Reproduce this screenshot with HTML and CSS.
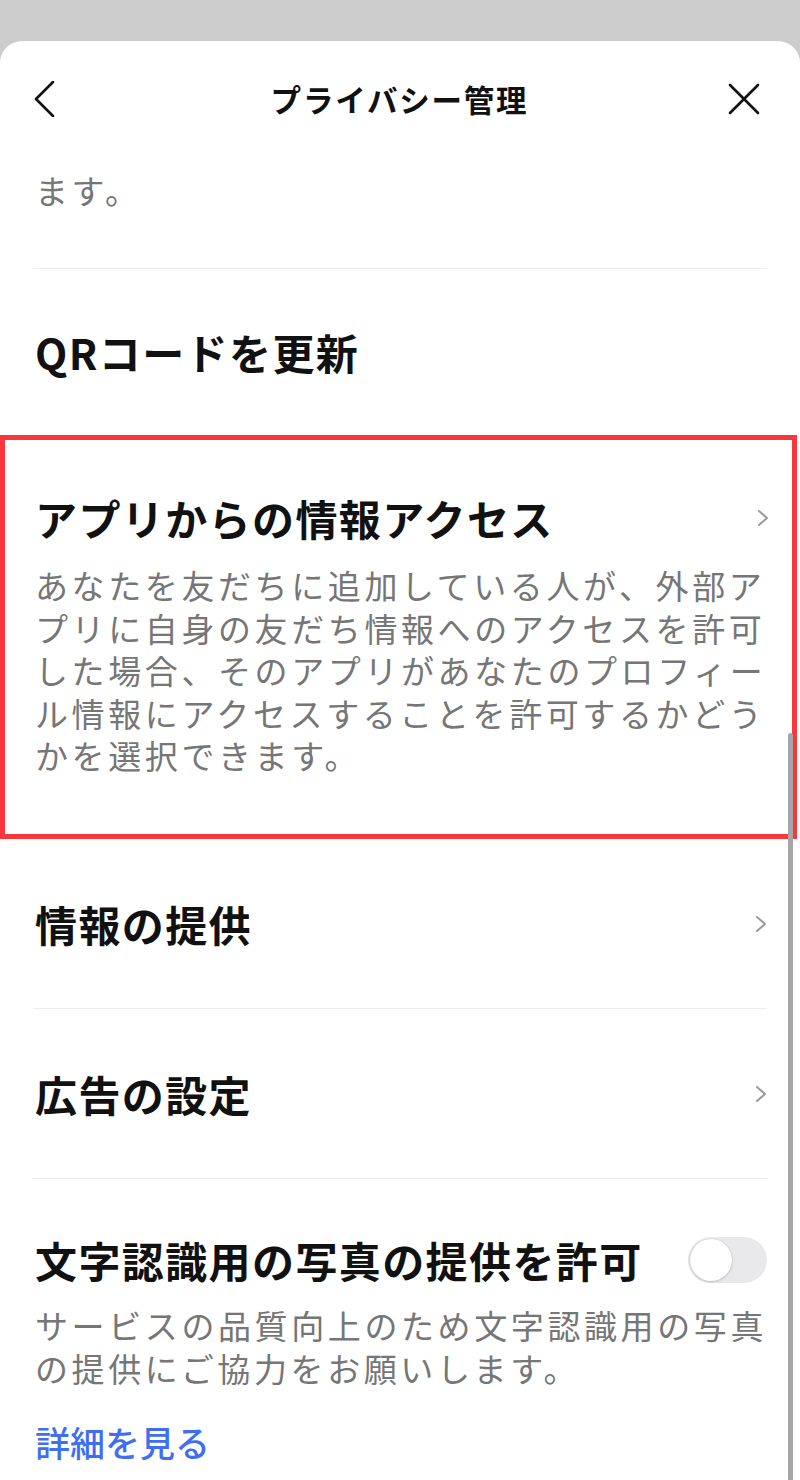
FILE: index.html
```html
<!DOCTYPE html>
<html lang="ja">
<head>
<meta charset="utf-8">
<title>プライバシー管理</title>
<link rel="stylesheet" href="styles.css">
</head>
<body>
<div class="sheet">
  <header class="header">
    <button class="icon-btn back" aria-label="戻る">
      <svg width="24" height="36" viewBox="0 0 24 36"><polyline points="20,1 3,18 20,35" fill="none" stroke="#111" stroke-width="2.6" stroke-linecap="round" stroke-linejoin="round"/></svg>
    </button>
    <h1 class="title">プライバシー管理</h1>
    <button class="icon-btn close" aria-label="閉じる">
      <svg width="32" height="32" viewBox="0 0 32 32"><path d="M2 2 L30 30 M30 2 L2 30" fill="none" stroke="#111" stroke-width="2.6" stroke-linecap="round"/></svg>
    </button>
  </header>

  <div class="list">
    <div class="row intro">
      <p class="desc">ます。</p>
    </div>

    <div class="row qr">
      <span class="heading">QRコードを更新</span>
    </div>

    <div class="row highlight">
      <div class="row-head">
        <span class="heading">アプリからの情報アクセス</span>
        <svg class="chev" width="12" height="18" viewBox="0 0 12 18"><polyline points="2,2 10,9 2,16" fill="none" stroke="#9a9a9a" stroke-width="2" stroke-linecap="round" stroke-linejoin="round"/></svg>
      </div>
      <p class="desc block">あなたを友だちに追加している人が、外部ア<br>プリに自身の友だち情報へのアクセスを許可<br>した場合、そのアプリがあなたのプロフィー<br>ル情報にアクセスすることを許可するかどう<br>かを選択できます。</p>
    </div>

    <div class="row simple">
      <div class="row-head">
        <span class="heading">情報の提供</span>
        <svg class="chev" width="12" height="18" viewBox="0 0 12 18"><polyline points="2,2 10,9 2,16" fill="none" stroke="#9a9a9a" stroke-width="2" stroke-linecap="round" stroke-linejoin="round"/></svg>
      </div>
    </div>

    <div class="row simple top-border">
      <div class="row-head">
        <span class="heading">広告の設定</span>
        <svg class="chev" width="12" height="18" viewBox="0 0 12 18"><polyline points="2,2 10,9 2,16" fill="none" stroke="#9a9a9a" stroke-width="2" stroke-linecap="round" stroke-linejoin="round"/></svg>
      </div>
    </div>

    <div class="row toggle-row top-border">
      <div class="row-head">
        <span class="heading">文字認識用の写真の提供を許可</span>
        <span class="toggle"><span class="knob"></span></span>
      </div>
      <p class="desc block">サービスの品質向上のため文字認識用の写真<br>の提供にご協力をお願いします。</p>
      <a class="link" href="#">詳細を見る</a>
    </div>
  </div>

  <div class="scrollbar"></div>
</div>
</body>
</html>
```

FILE: styles.css
```css
html, body {
  margin: 0;
  padding: 0;
}

body {
  background: #cccccc;
  font-family: "Noto Sans CJK JP", "Noto Sans", sans-serif;
  color: #111;
  width: 800px;
  height: 1480px;
  overflow: hidden;
}

.sheet {
  position: relative;
  margin-top: 41px;
  background: #fff;
  border-radius: 22px 22px 0 0;
  height: 1439px;
  overflow: hidden;
}

.header {
  height: 116px;
  display: grid;
  grid-template-columns: 1fr auto 1fr;
  align-items: center;
  padding: 0 40px 0 33px;
}

.icon-btn {
  border: 0;
  background: none;
  padding: 0;
  display: flex;
  align-items: center;
}

.back {
  justify-self: start;
}

.close {
  justify-self: end;
}

.title {
  margin: 0;
  font-size: 30.5px;
  font-weight: 700;
  letter-spacing: 1.8px;
  line-height: 40px;
  margin-left: 6px;
}

.list {
  display: flex;
  flex-direction: column;
}

.row {
  margin: 0 33px;
  padding: 0 2px;
}

.intro {
  padding-top: 10px;
  padding-bottom: 55px;
  border-bottom: 1.5px solid #ececec;
}

.desc {
  margin: 0;
  font-size: 33px;
  letter-spacing: 3.6px;
  line-height: 46px;
  color: #767676;
  white-space: nowrap;
}

.desc.block {
  line-height: 42.5px;
}

.heading {
  font-size: 42px;
  font-weight: 700;
  letter-spacing: 1.4px;
  line-height: 56px;
  white-space: nowrap;
}

.qr {
  padding-top: 55px;
  padding-bottom: 55px;
}

.simple {
  padding-top: 56.5px;
  padding-bottom: 56.5px;
}

.top-border {
  border-top: 1.5px solid #ececec;
}

.row-head {
  display: flex;
  align-items: center;
  justify-content: space-between;
}

.chev {
  margin-right: -2px;
}

.highlight {
  margin: 0 3px 0 0;
  border: 5px solid #f7373b;
  padding: 49.5px 25px 57.5px 30px;
}

.highlight .desc {
  margin-top: 18.5px;
}

.toggle-row {
  padding-top: 52.5px;
  padding-bottom: 30px;
}

.toggle-row .desc {
  margin-top: 16.5px;
}

.toggle {
  width: 79px;
  height: 46px;
  border-radius: 23px;
  background: #e9e9eb;
  display: flex;
  align-items: center;
  padding: 0 2px;
  box-sizing: border-box;
  margin-right: -2px;
}

.knob {
  width: 42px;
  height: 42px;
  border-radius: 50%;
  background: #fff;
  box-shadow: 0 1px 3px rgba(0, 0, 0, 0.18), 0 0 0 0.5px rgba(0, 0, 0, 0.06);
}

.link {
  display: block;
  margin-top: 28px;
  font-size: 35px;
  font-weight: 500;
  line-height: 50px;
  color: #3f6ff0;
  text-decoration: none;
}

.scrollbar {
  position: absolute;
  right: 7px;
  top: 692px;
  width: 5px;
  height: 800px;
  border-radius: 3px;
  background: #a6a6a6;
}
```
